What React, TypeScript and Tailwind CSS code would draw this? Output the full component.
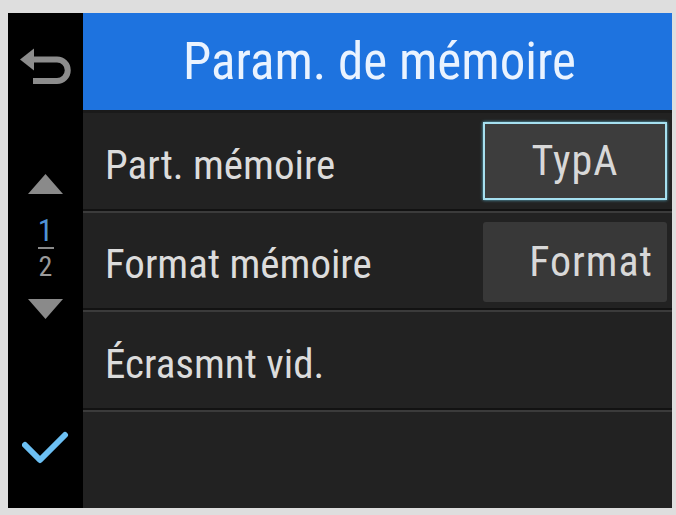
const font = { fontFamily: '"Liberation Sans Narrow", "Roboto Condensed", Roboto, "Liberation Sans", sans-serif' };

function BackIcon() {
  return (
    <svg width="52" height="36" viewBox="0 0 52 36">
      <polygon points="0,11.5 14,0.5 14,22.5" fill="#8c8c8c" />
      <path d="M12 11.5 H37 A10.75 10.75 0 0 1 37 33 H13" fill="none" stroke="#8c8c8c" strokeWidth="6" />
    </svg>
  );
}

function Triangle({ up }: { up?: boolean }) {
  return (
    <svg width="35" height="20" viewBox="0 0 35 20">
      <polygon points={up ? '17.5,0 35,20 0,20' : '0,0 35,0 17.5,20'} fill="#8a8a8a" />
    </svg>
  );
}

function CheckIcon() {
  return (
    <svg width="48" height="36" viewBox="0 0 48 36">
      <polyline points="3,15 18,30 43,5" fill="none" stroke="#6cc0f4" strokeWidth="6" strokeLinecap="round" strokeLinejoin="round" />
    </svg>
  );
}

function Separator() {
  return (
    <div className="flex flex-col">
      <div className="h-[2px] bg-[#121212]" />
      <div className="h-[2px] bg-[#3b3b3b]" />
    </div>
  );
}

function Row({ label, height, children }: { label: string; height: string; children?: React.ReactNode }) {
  return (
    <div className={`flex items-center justify-between pl-[22px] pr-[5px] ${height}`}>
      <span className="text-[41px] text-[#dcdcdc] leading-none pt-[8px]">{label}</span>
      {children}
    </div>
  );
}

export default function App() {
  return (
    <div className="w-[676px] h-[515px] bg-[#dedede] pt-[13px] pl-[8px]" style={font}>
      <div className="w-[664px] h-[495px] flex bg-black">
        <div className="w-[75px] flex flex-col items-center bg-black">
          <div className="mt-[35px]">
            <BackIcon />
          </div>
          <div className="mt-[90px]">
            <Triangle up />
          </div>
          <div className="mt-[22px] flex flex-col items-center">
            <span className="text-[31px] leading-[30px] text-[#4f93d6]">1</span>
            <div className="w-[16px] h-[2px] bg-[#8a8a8a] mt-[1px]" />
            <span className="text-[28px] leading-[28px] text-[#9a9a9a] mt-[4px]">2</span>
          </div>
          <div className="mt-[18px]">
            <Triangle />
          </div>
          <div className="mt-[111px] ml-[1px]">
            <CheckIcon />
          </div>
        </div>
        <div className="flex-1 flex flex-col bg-[#222222]">
          <div className="h-[97px] bg-[#1e73df] flex items-center justify-center">
            <span className="text-[51px] text-[#eaf3ff] leading-none pl-[4px]">Param. de mémoire</span>
          </div>
          <div className="h-[3px] bg-[#1a1a1a]" />
          <Row label="Part. mémoire" height="h-[96px]">
            <div className="w-[184px] h-[78px] border-2 border-[#a6e0f0] bg-[#3d3d3d] flex items-center justify-center shadow-[0_0_3px_#5fb6d0]">
              <span className="text-[42px] text-[#d8d8d8] leading-none tracking-[1px]">TypA</span>
            </div>
          </Row>
          <Separator />
          <Row label="Format mémoire" height="h-[95px]">
            <div className="w-[184px] h-[80px] mt-[3px] rounded-[3px] bg-[#383838] flex items-center justify-end pr-[14px]">
              <span className="text-[42px] text-[#d8d8d8] leading-none tracking-[1px]">Format</span>
            </div>
          </Row>
          <Separator />
          <Row label="Écrasmnt vid." height="h-[96px]" />
          <Separator />
          <div className="flex-1" />
        </div>
      </div>
    </div>
  );
}
